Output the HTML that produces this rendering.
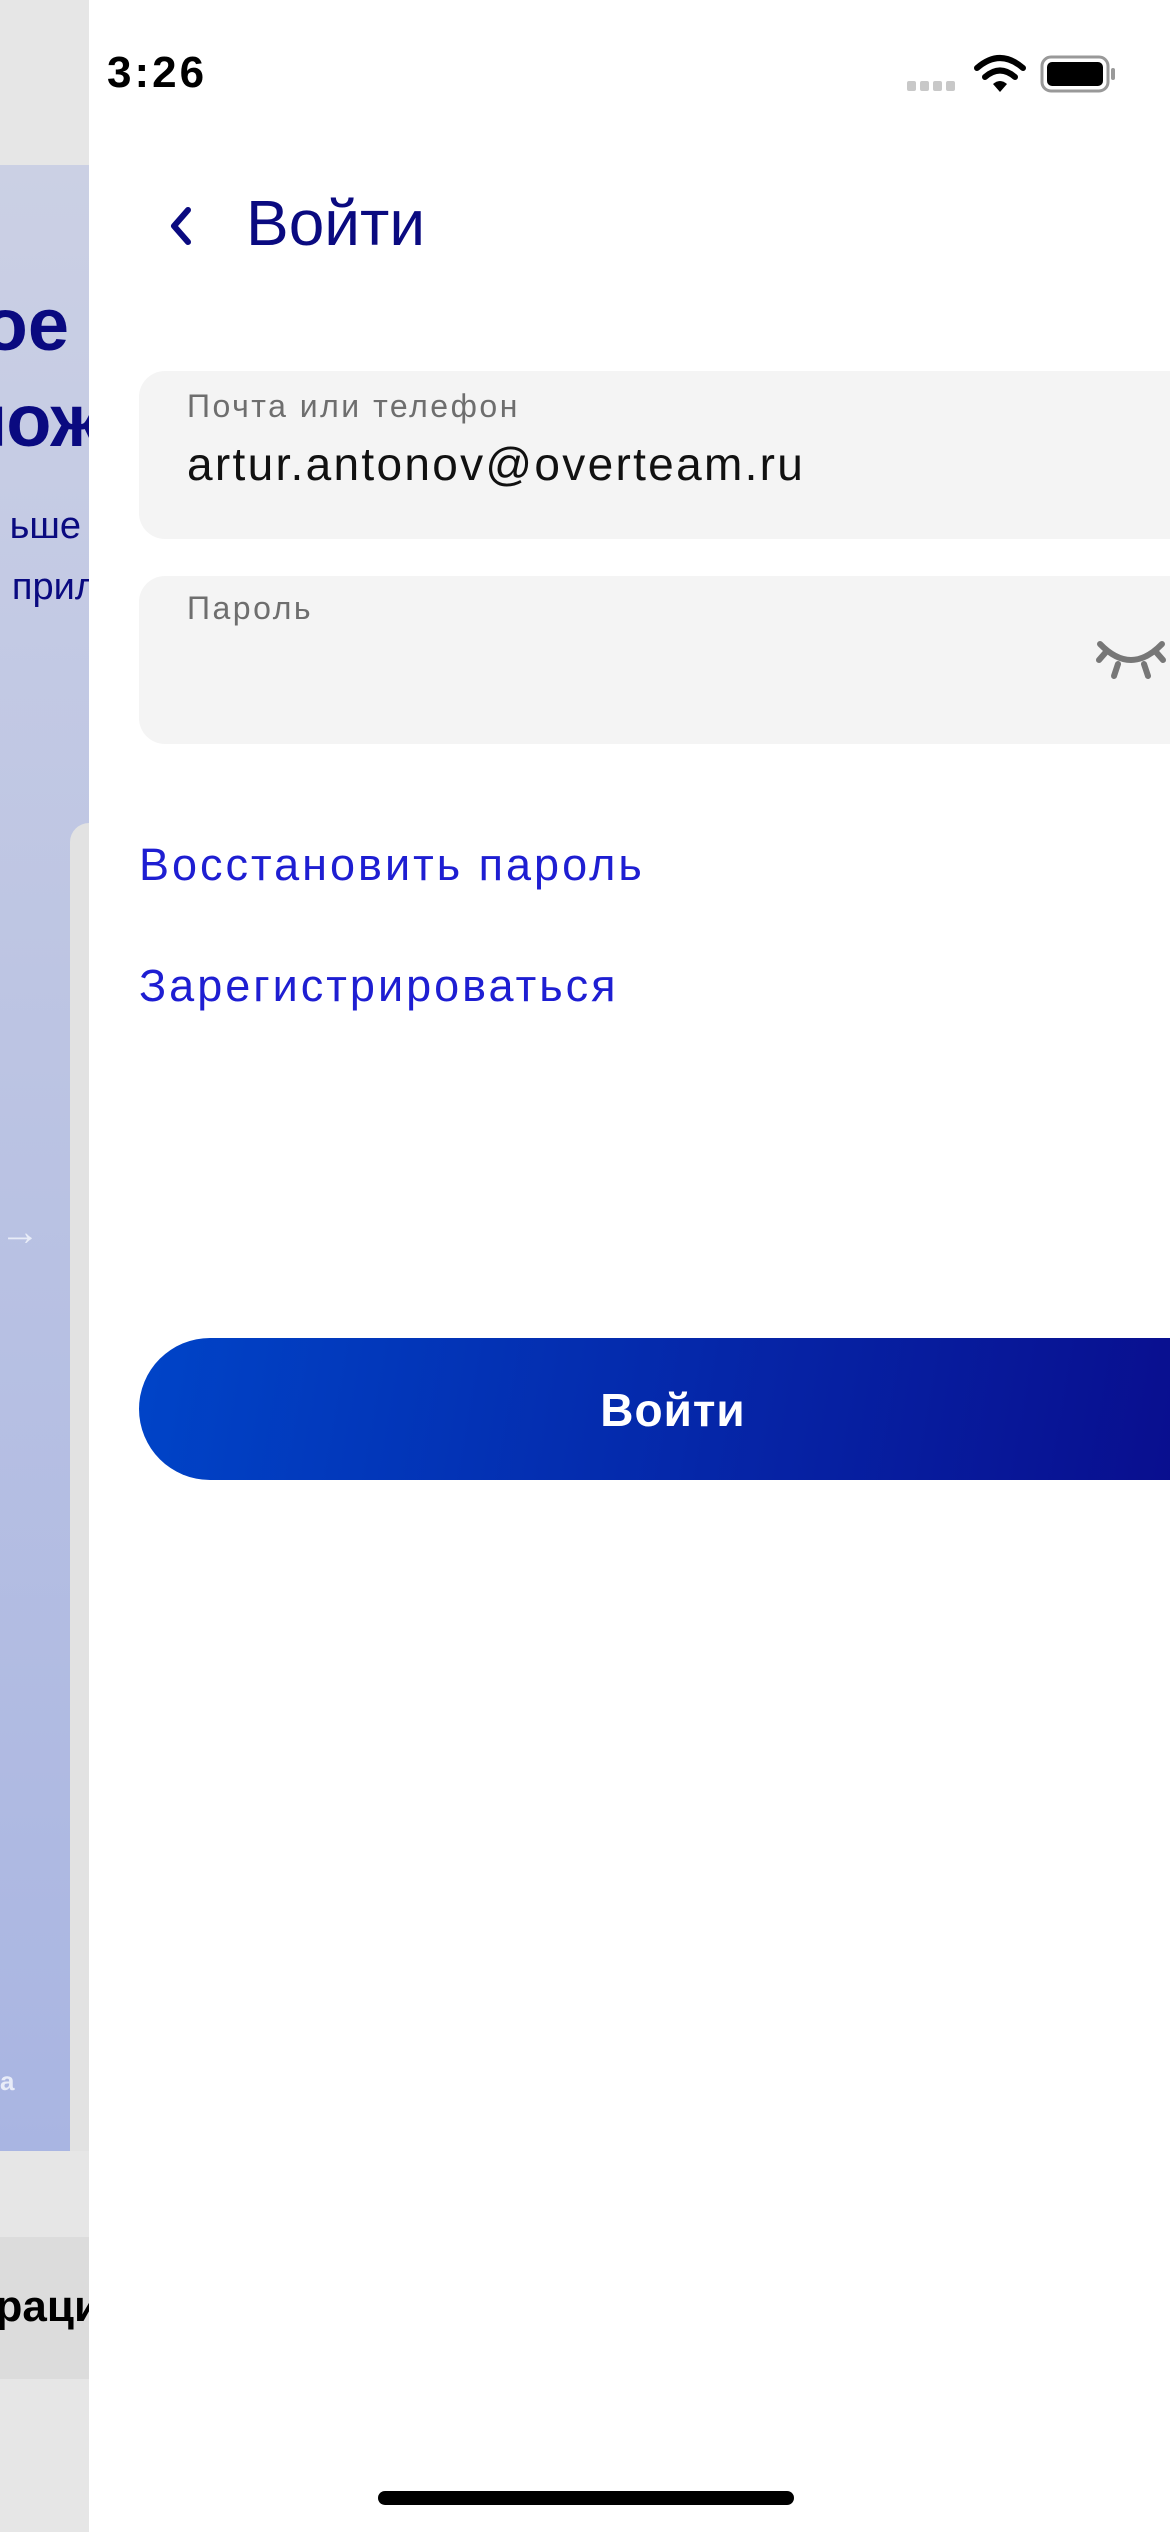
<!DOCTYPE html>
<html><head><meta charset="utf-8"><style>
*{margin:0;padding:0;box-sizing:border-box}
body{width:1170px;height:2532px;position:relative;overflow:hidden;background:#fff;font-family:"Liberation Sans","DejaVu Sans",sans-serif}
.left{position:absolute;left:0;top:0;width:89px;height:2532px;background:#e6e6e6;overflow:hidden}
.panel{position:absolute;left:0;top:165px;width:89px;height:1986px;background:linear-gradient(#cbd0e4,#a9b5e2)}
.strip{position:absolute;left:70px;top:823px;width:19px;height:1328px;background:#e2e2e2;border-top-left-radius:30px}
.lt{position:absolute;right:0;white-space:nowrap;color:#0a0a80}
.sheet{position:absolute;left:89px;top:0;width:1081px;height:2532px;background:#fff}
.field{position:absolute;left:139px;width:1100px;height:168px;background:#f4f4f4;border-radius:26px}
.lbl{position:absolute;left:187px;font-size:32px;color:#6e6e6e;letter-spacing:2.5px}
.link{position:absolute;left:139px;font-size:45px;color:#1e1ed2;letter-spacing:3px}
</style></head><body>
<div class="left">
 <div class="panel"></div>
 <div class="strip"></div>
 <div class="lt" style="top:282px;font-size:74px;font-weight:bold;right:20px">ое</div>
 <div class="lt" style="top:378px;font-size:74px;font-weight:bold;right:-14px">лож</div>
 <div class="lt" style="top:505px;font-size:38px;right:8px">ьше</div>
 <div class="lt" style="top:566px;font-size:38px;right:-8px">прил</div>
 <div style="position:absolute;left:0;top:1210px;color:#e8ecf8;font-size:40px">→</div>
 <div style="position:absolute;left:0;top:2066px;color:#e8ecf8;font-size:26px;font-weight:bold">а</div>
 <div style="position:absolute;left:0;top:2237px;width:89px;height:142px;background:#dcdcdc"></div>
 <div class="lt" style="top:2282px;font-size:44px;font-weight:bold;color:#000;right:-12px">раци</div>
</div>
<div class="sheet"></div>
<div style="position:absolute;left:107px;top:48px;font-size:44px;font-weight:bold;color:#000;letter-spacing:3px">3:26</div>
<svg style="position:absolute;left:905px;top:50px" width="215" height="50" viewBox="0 0 215 50">
 <g fill="#c8c8c8"><rect x="2" y="31" width="9" height="10" rx="2"/><rect x="15" y="31" width="9" height="10" rx="2"/><rect x="28" y="31" width="9" height="10" rx="2"/><rect x="41" y="31" width="9" height="10" rx="2"/></g>
 <path d="M72 18 Q95 -2 118 18" stroke="#000" stroke-width="6" fill="none" stroke-linecap="round"/>
 <path d="M80 27 Q95 14 110 27" stroke="#000" stroke-width="6" fill="none" stroke-linecap="round"/>
 <path d="M88 34 L95 42 L102 34 Q95 28 88 34Z" fill="#000"/>
 <rect x="137" y="7" width="66" height="34" rx="9" fill="none" stroke="#999" stroke-width="3"/>
 <rect x="142" y="12" width="56" height="24" rx="5" fill="#000"/>
 <rect x="206" y="18" width="4" height="12" rx="2" fill="#999"/>
</svg>
<svg style="position:absolute;left:162px;top:202px" width="36" height="48" viewBox="0 0 36 48"><path d="M26 8 L12 24 L26 40" stroke="#0a0a80" stroke-width="6" fill="none" stroke-linecap="round" stroke-linejoin="round"/></svg>
<div style="position:absolute;left:246px;top:186px;font-size:64px;color:#0a0a80">Войти</div>
<div class="field" style="top:371px"></div>
<div class="lbl" style="top:388px">Почта или телефон</div>
<div style="position:absolute;left:187px;top:437px;font-size:46px;color:#111;letter-spacing:2.3px">artur.antonov@overteam.ru</div>
<div class="field" style="top:576px"></div>
<div class="lbl" style="top:590px">Пароль</div>
<svg style="position:absolute;left:1096px;top:636px" width="74" height="50" viewBox="0 0 74 50"><g stroke="#777" stroke-width="6" fill="none" stroke-linecap="round"><path d="M4 8 Q35 40 66 8"/><path d="M22 28 L18 40"/><path d="M48 28 L52 40"/><path d="M10 16 L3 24"/><path d="M60 16 L67 24"/></g></svg>
<div class="link" style="top:839px">Восстановить пароль</div>
<div class="link" style="top:960px">Зарегистрироваться</div>
<div style="position:absolute;left:139px;top:1338px;width:1120px;height:142px;border-radius:71px;background:linear-gradient(100deg,#0044c8,#0a0a8a)"></div>
<div style="position:absolute;left:139px;top:1383px;width:1068px;text-align:center;font-size:46px;font-weight:bold;color:#fff;letter-spacing:1px">Войти</div>
<div style="position:absolute;left:378px;top:2491px;width:416px;height:14px;border-radius:7px;background:#000"></div>
</body></html>
